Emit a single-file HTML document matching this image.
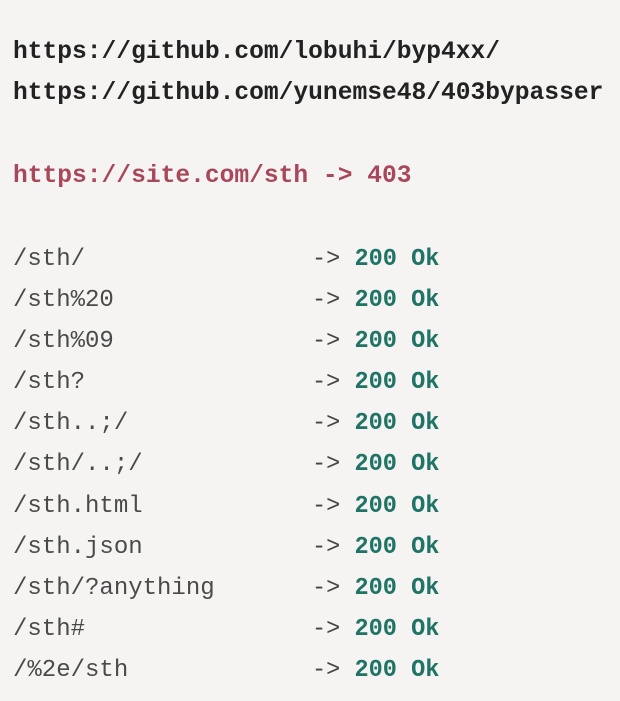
<!DOCTYPE html>
<html><head><meta charset="utf-8"><style>
html,body{margin:0;padding:0;background:#f5f4f2;width:620px;height:701px;overflow:hidden}
body{position:relative;font-family:"Liberation Mono","DejaVu Sans Mono",monospace}
.l{position:absolute;left:13px;font-size:23.6px;line-height:30px;white-space:pre}
.b{font-weight:bold;color:#222;font-size:24.6px}
.r{font-weight:bold;color:#a8485a;font-size:24.6px}
.p{color:#4a4a4a;font-size:24px}
.a{position:absolute;left:312px;font-size:23.6px;line-height:30px;white-space:pre;color:#444}
.g{color:#1f7466;font-weight:bold}
</style></head><body>
<div class="l b" style="top:38px">https://github.com/lobuhi/byp4xx/</div>
<div class="l b" style="top:79px">https://github.com/yunemse48/403bypasser</div>
<div class="l r" style="top:162px">https://site.com/sth -&gt; 403</div>

<div class="l p" style="top:245px">/sth/</div><div class="a" style="top:245px">-&gt; <span class="g">200 Ok</span></div>
<div class="l p" style="top:286px">/sth%20</div><div class="a" style="top:286px">-&gt; <span class="g">200 Ok</span></div>
<div class="l p" style="top:327px">/sth%09</div><div class="a" style="top:327px">-&gt; <span class="g">200 Ok</span></div>
<div class="l p" style="top:368px">/sth?</div><div class="a" style="top:368px">-&gt; <span class="g">200 Ok</span></div>
<div class="l p" style="top:409px">/sth..;/</div><div class="a" style="top:409px">-&gt; <span class="g">200 Ok</span></div>
<div class="l p" style="top:450px">/sth/..;/</div><div class="a" style="top:450px">-&gt; <span class="g">200 Ok</span></div>
<div class="l p" style="top:492px">/sth.html</div><div class="a" style="top:492px">-&gt; <span class="g">200 Ok</span></div>
<div class="l p" style="top:533px">/sth.json</div><div class="a" style="top:533px">-&gt; <span class="g">200 Ok</span></div>
<div class="l p" style="top:574px">/sth/?anything</div><div class="a" style="top:574px">-&gt; <span class="g">200 Ok</span></div>
<div class="l p" style="top:615px">/sth#</div><div class="a" style="top:615px">-&gt; <span class="g">200 Ok</span></div>
<div class="l p" style="top:656px">/%2e/sth</div><div class="a" style="top:656px">-&gt; <span class="g">200 Ok</span></div>
</body></html>
